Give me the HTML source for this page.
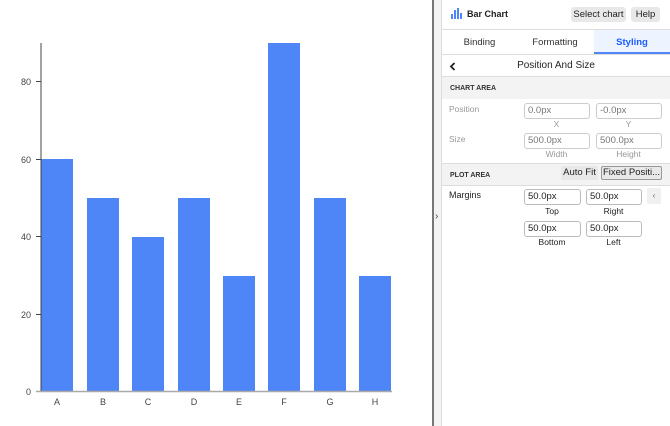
<!DOCTYPE html>
<html><head><style>
body{margin:0;width:670px;height:426px;overflow:hidden;background:#fff;font-family:"Liberation Sans",sans-serif;position:relative}
.abs{position:absolute}
.inp{position:absolute;height:14px;border:1px solid #ccc;border-radius:3px;font-size:9.5px;color:#777;line-height:14px;padding-left:3px;box-sizing:content-box}
.lbl{position:absolute;font-size:8.5px;color:#999;text-align:center}
.sec{position:absolute;left:442px;width:228px;background:#f3f3f3;font-size:7px;font-weight:bold;color:#333}
</style></head><body>
<svg class="abs" style="left:0;top:0" width="432" height="426">
<g fill="#4f86f7">
<rect x="41" y="159" width="32" height="232"/>
<rect x="87" y="198" width="32" height="193"/>
<rect x="132" y="237" width="32" height="154"/>
<rect x="178" y="198" width="32" height="193"/>
<rect x="223" y="276" width="32" height="115"/>
<rect x="268" y="43" width="32" height="348"/>
<rect x="314" y="198" width="32" height="193"/>
<rect x="359" y="276" width="32" height="115"/>
</g>
<line x1="41" y1="43" x2="41" y2="392" stroke="#444" stroke-width="1"/>
<line x1="36" y1="391.5" x2="392" y2="391.5" stroke="#aaa" stroke-width="1.5"/>
<g stroke="#444"><line x1="36" x2="41" y1="81.5" y2="81.5"/><line x1="36" x2="41" y1="159.5" y2="159.5"/><line x1="36" x2="41" y1="236.5" y2="236.5"/><line x1="36" x2="41" y1="314.5" y2="314.5"/></g>
<g font-family="Liberation Sans" font-size="9" fill="#444" text-anchor="end">
<text x="31" y="85">80</text><text x="31" y="163">60</text><text x="31" y="240">40</text><text x="31" y="318">20</text><text x="31" y="395">0</text></g>
<g font-family="Liberation Sans" font-size="9" fill="#444" text-anchor="middle">
<text x="57" y="405">A</text><text x="103" y="405">B</text><text x="148" y="405">C</text><text x="194" y="405">D</text><text x="239" y="405">E</text><text x="284" y="405">F</text><text x="330" y="405">G</text><text x="375" y="405">H</text></g>
</svg>
<div class="abs" style="left:432px;top:0;width:2px;height:426px;background:#777"></div>
<div class="abs" style="left:434px;top:0;width:7px;height:426px;background:#f3f3f3;border-right:1px solid #ddd"></div>
<div class="abs" style="left:435px;top:211px;font-size:10px;color:#444">›</div>
<svg class="abs" style="left:451px;top:8px" width="12" height="11"><g fill="#4f86f7"><rect x="0" y="6" width="2" height="5"/><rect x="3" y="2" width="2" height="9"/><rect x="6" y="0" width="2" height="11"/><rect x="9" y="5" width="2" height="6"/></g></svg>
<div class="abs" style="left:467px;top:9px;font-size:9px;font-weight:bold;color:#222">Bar Chart</div>
<div class="abs" style="left:571px;top:7px;width:55px;height:15px;background:#e8e8e8;border-radius:3px;font-size:9.5px;color:#222;text-align:center;line-height:15px">Select chart</div>
<div class="abs" style="left:631px;top:7px;width:29px;height:15px;background:#e8e8e8;border-radius:3px;font-size:9.5px;color:#222;text-align:center;line-height:15px">Help</div>
<div class="abs" style="left:442px;top:29px;width:228px;height:1px;background:#ddd"></div>
<div class="abs" style="left:442px;top:30px;width:228px;height:24px;font-size:9.5px;color:#333">
<div class="abs" style="left:0;width:75px;text-align:center;top:7px">Binding</div>
<div class="abs" style="left:75px;width:76px;text-align:center;top:7px">Formatting</div>
<div class="abs" style="left:152px;width:76px;height:22px;background:#eef4ff;border-bottom:2px solid #4f86f7"><div style="text-align:center;margin-top:7px;color:#1a5cff;font-weight:bold">Styling</div></div>
</div>
<div class="abs" style="left:442px;top:54px;width:228px;height:1px;background:#ddd"></div>
<svg class="abs" style="left:449px;top:62px" width="8" height="9"><path d="M5.5 1 L2 4.5 L5.5 8" stroke="#222" stroke-width="1.8" fill="none"/></svg>
<div class="abs" style="left:442px;top:60px;width:228px;text-align:center;font-size:10px;color:#222">Position And Size</div>
<div class="sec" style="top:76px;height:22px;border-top:1px solid #ddd"><span class="abs" style="left:8px;top:8px">CHART AREA</span></div>
<div class="abs" style="left:449px;top:104px;font-size:8.5px;color:#999">Position</div>
<div class="inp" style="left:524px;top:103px;width:61px">0.0px</div>
<div class="inp" style="left:596px;top:103px;width:61px">-0.0px</div>
<div class="lbl" style="left:524px;top:119px;width:65px">X</div>
<div class="lbl" style="left:596px;top:119px;width:65px">Y</div>
<div class="abs" style="left:449px;top:134px;font-size:8.5px;color:#999">Size</div>
<div class="inp" style="left:524px;top:133px;width:61px">500.0px</div>
<div class="inp" style="left:596px;top:133px;width:61px">500.0px</div>
<div class="lbl" style="left:524px;top:149px;width:65px">Width</div>
<div class="lbl" style="left:596px;top:149px;width:65px">Height</div>
<div class="sec" style="top:163px;height:21px;border-top:1px solid #ddd;border-bottom:1px solid #ddd"><span class="abs" style="left:8px;top:8px">PLOT AREA</span></div>
<div class="abs" style="left:561px;top:166px;width:37px;height:14px;background:#e8e8e8;border-radius:2px;font-size:9.5px;color:#222;text-align:center;line-height:14px">Auto Fit</div>
<div class="abs" style="left:601px;top:166px;width:59px;height:12px;background:#e8e8e8;border:1px solid #999;border-radius:2px;font-size:9.5px;color:#222;text-align:center;line-height:12px;white-space:nowrap;overflow:hidden">Fixed Positi...</div>
<div class="abs" style="left:449px;top:190px;font-size:9px;color:#222">Margins</div>
<div class="inp" style="left:524px;top:189px;width:52px;color:#222;border-color:#bbb">50.0px</div>
<div class="inp" style="left:586px;top:189px;width:51px;color:#222;border-color:#bbb">50.0px</div>
<div class="abs" style="left:647px;top:188px;width:14px;height:16px;background:#f0f0f0;border-radius:2px;font-size:8px;color:#666;text-align:center;line-height:16px">‹</div>
<div class="lbl" style="left:524px;top:206px;width:56px;color:#222">Top</div>
<div class="lbl" style="left:586px;top:206px;width:55px;color:#222">Right</div>
<div class="inp" style="left:524px;top:221px;width:52px;color:#222;border-color:#bbb">50.0px</div>
<div class="inp" style="left:586px;top:221px;width:51px;color:#222;border-color:#bbb">50.0px</div>
<div class="lbl" style="left:524px;top:237px;width:56px;color:#222">Bottom</div>
<div class="lbl" style="left:586px;top:237px;width:55px;color:#222">Left</div>
</body></html>
